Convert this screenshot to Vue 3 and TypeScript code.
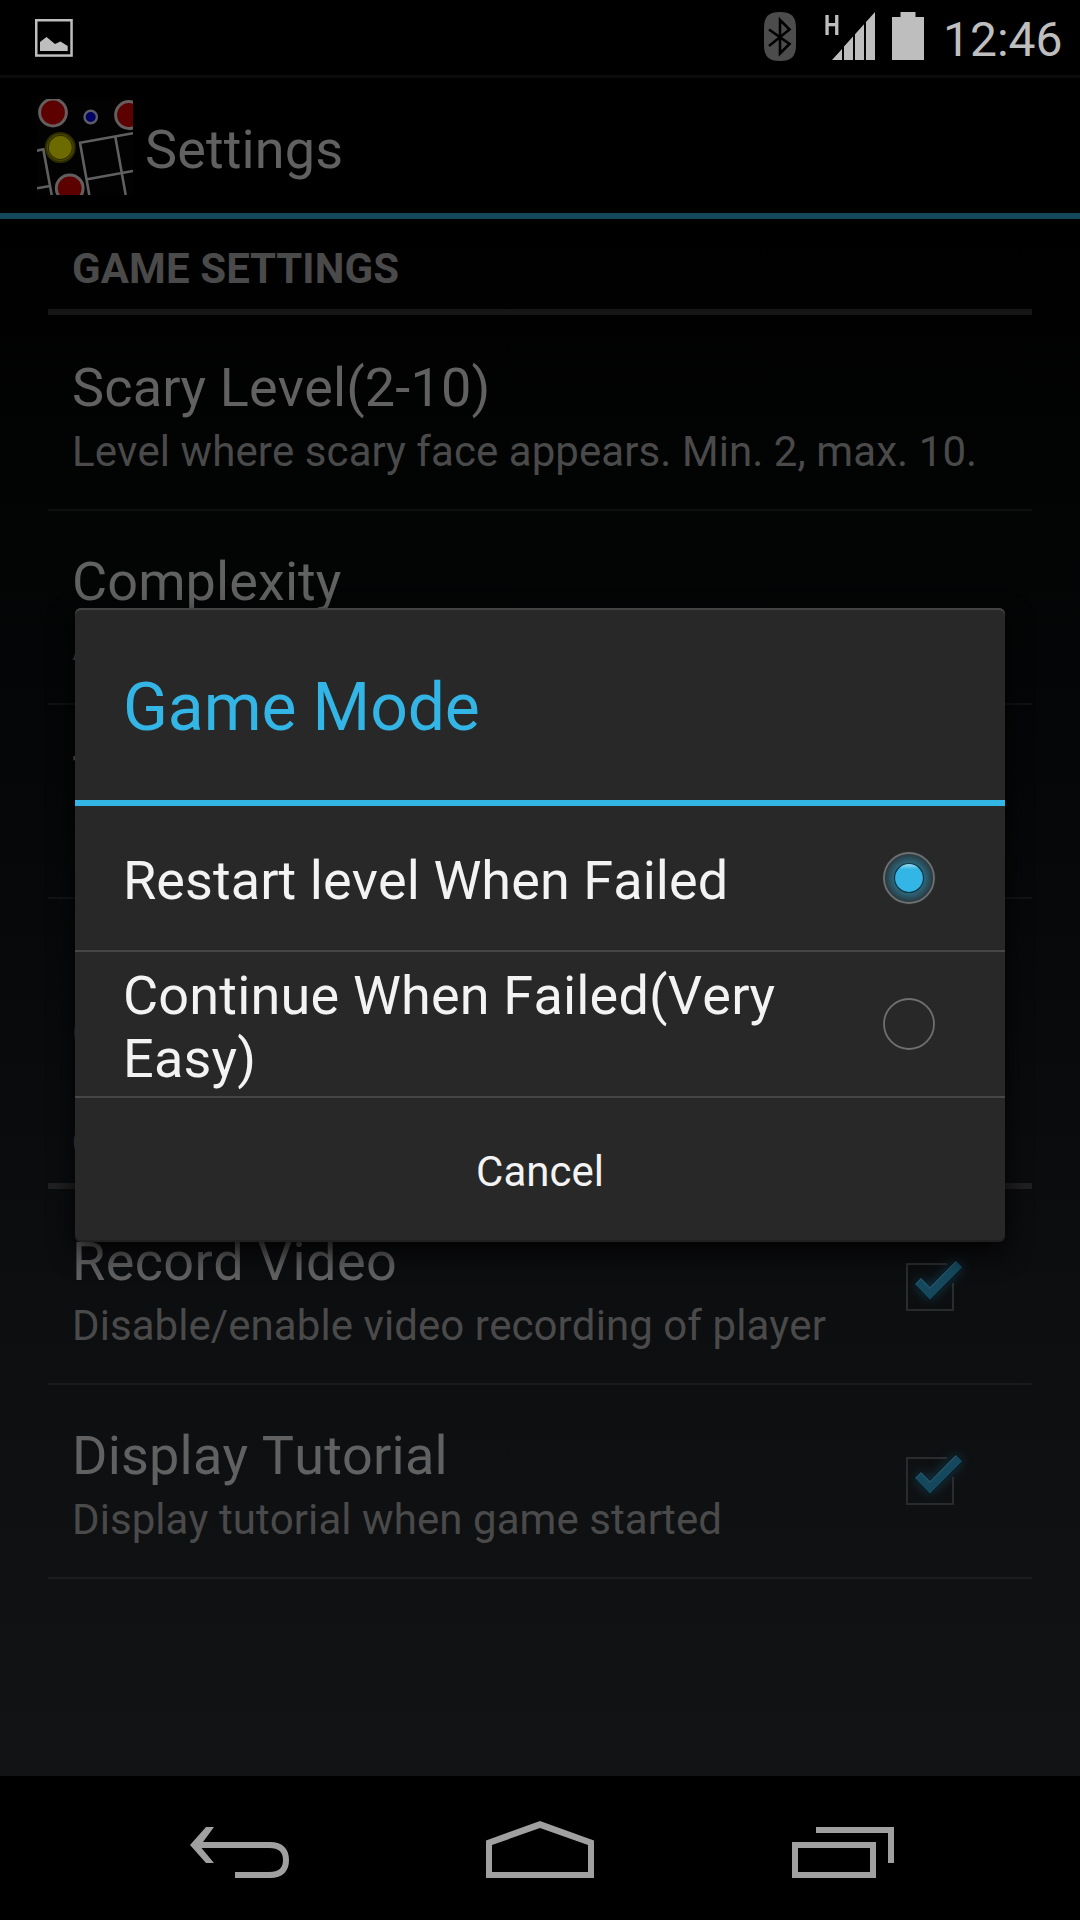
<script setup lang="ts">
import { ref } from 'vue'

interface Preference {
  title: string
  summary: string
  checked?: boolean
  tracking: number
}

interface Category {
  name: string
  items: Preference[]
}

const categories: Category[] = [
  {
    name: 'GAME SETTINGS',
    items: [
      { title: 'Scary Level(2-10)', summary: 'Level where scary face appears. Min. 2, max. 10.', tracking: 0.15 },
      { title: 'Complexity', summary: 'A', tracking: 0.1 },
      { title: 'T', summary: '', tracking: 0 },
      { title: '', summary: 'C', tracking: 0 },
    ],
  },
  {
    name: 'G',
    items: [
      { title: 'Record Video', summary: 'Disable/enable video recording of player', checked: true, tracking: 0.38 },
      { title: 'Display Tutorial', summary: 'Display tutorial when game started', checked: true, tracking: 0.2 },
    ],
  },
]

const modes = [
  { label: 'Restart level When Failed', tracking: 0.08 },
  { label: 'Continue When Failed(Very Easy)', tracking: 0.19 },
]
const selected = ref(0)
</script>

<template>
  <div class="screen">
    <header class="status">
      <svg class="shot" width="38" height="38" viewBox="0 0 38 38">
        <rect x="1.25" y="1.25" width="35.3" height="35.3" fill="none" stroke="#bebebe" stroke-width="2.5" />
        <path d="M5 32V23L11.5 18L20 25L25.5 22.5L32.7 27V32Z" fill="#bebebe" />
      </svg>
      <div class="tray">
        <svg width="32" height="49" viewBox="0 0 32 49">
          <path d="M16 0C27 0 32 4 32 16V33C32 45 27 49 16 49S0 45 0 33V16C0 4 5 0 16 0Z" fill="#4c4c4c" />
          <path d="M5 17.5L25.5 32L16 41.5V8L25.5 17.5L5 34" fill="none" stroke="#000" stroke-width="2.6" />
        </svg>
        <span class="net">H</span>
        <svg class="signal" width="43" height="48" viewBox="0 0 43 48">
          <path d="M0 48L10 37V48ZM12 48V34.6L21 24.6V48ZM23 48V22.3L32 12.3V48ZM34 48V10L43 0V48Z" fill="#bebebe" />
        </svg>
        <svg class="battery" width="32" height="48" viewBox="0 0 32 48">
          <path d="M0 5H8.5V0H23.5V5H32V48H0Z" fill="#bebebe" />
        </svg>
        <span class="clock">12:46</span>
      </div>
    </header>

    <div class="actionbar">
      <svg class="logo" width="96" height="96" viewBox="0 0 96 96">
        <rect width="96" height="96" fill="#020203" />
        <g fill="none" stroke="#606060" stroke-width="2.6">
          <path d="M96 34.3L43 43.7L52.3 96M78.3 37.7L88.7 96M50.3 80.3L96 72" />
          <path d="M0 51.7L6.3 50.3L14.7 96M0 89.3L13 87" />
        </g>
        <g fill="#5c0000" stroke="#645e5e" stroke-width="3">
          <circle cx="16" cy="13.5" r="13.4" />
          <circle cx="92" cy="16" r="13.4" />
          <circle cx="32.7" cy="89.3" r="13.4" />
        </g>
        <circle cx="53.7" cy="18" r="6.2" fill="#000064" stroke="#5c5c68" stroke-width="2.4" />
        <circle cx="23.3" cy="48.5" r="15.5" fill="#2e2d00" />
        <circle cx="23.3" cy="48.5" r="13" fill="none" stroke="#4a4900" stroke-width="1.2" />
        <circle cx="23.3" cy="48.5" r="11.4" fill="#6d6b00" />
      </svg>
      <h1>Settings</h1>
    </div>

    <main class="prefs">
      <section v-for="cat in categories" :key="cat.name">
        <h2>{{ cat.name }}</h2>
        <div v-for="item in cat.items" :key="item.title" class="pref">
          <div>
            <div class="title" :style="{ letterSpacing: item.tracking + 'px' }">{{ item.title }}</div>
            <div class="summary">{{ item.summary }}</div>
          </div>
          <svg v-if="item.checked" class="check" width="96" height="96" viewBox="-24 -24 96 96">
            <path d="M41 1H1V47H47V20" fill="none" stroke="#2a2b2c" stroke-width="2" />
            <path class="glow" d="M9 21.3L15 15.3L24 24.3L50 -2L56.3 4.3L24 36.7Z" />
            <path d="M9 21.3L15 15.3L24 24.3L50 -2L56.3 4.3L24 36.7Z" fill="#15485d" stroke="#081319" stroke-width="1.6" paint-order="stroke" />
            <path d="M9.6 21.3L15 15.9L24 24.9L50 -1.4" fill="none" stroke="#27576b" stroke-width="1.2" />
          </svg>
        </div>
      </section>
    </main>

    <nav class="navbar">
      <svg width="100" height="60" viewBox="190 1820 100 60">
        <path d="M206 1827H214L203 1842H270C283 1842 289 1849 289 1860S283 1878 270 1878H235V1872H269C279 1872 283 1868 283 1860S279 1848 269 1848H201.500L214 1863H206L190 1845Z" fill="#a0a0a0" />
      </svg>
      <svg class="home" width="108" height="60" viewBox="486 1820 108 60">
        <path fill-rule="evenodd" d="M540 1821L594 1840.500V1878H486V1840.500ZM540 1828L492 1845V1872H588V1845Z" fill="#a0a0a0" />
      </svg>
      <svg width="102" height="60" viewBox="792 1820 102 60">
        <path fill-rule="evenodd" d="M792 1842H876V1878H792ZM798 1848V1872H870V1848ZM816 1827H894V1863H888V1833H816Z" fill="#a0a0a0" />
      </svg>
    </nav>

    <div class="dialog" role="dialog">
      <div class="dialog-title"><span>Game Mode</span></div>
      <div v-for="(mode, i) in modes" :key="mode.label" class="choice" @click="selected = i">
        <span class="label" :style="{ letterSpacing: mode.tracking + 'px' }">{{ mode.label }}</span>
        <svg width="96" height="96" viewBox="-48 -48 96 96">
          <defs>
            <radialGradient id="halo">
              <stop offset="0.5" stop-color="#33b5e5" stop-opacity="0.5" />
              <stop offset="1" stop-color="#33b5e5" stop-opacity="0.02" />
            </radialGradient>
            <linearGradient id="shine" x1="0" y1="0" x2="0" y2="1">
              <stop offset="0" stop-color="#a5e0f6" />
              <stop offset="0.2" stop-color="#33b5e5" />
            </linearGradient>
          </defs>
          <circle v-if="selected === i" r="27" fill="url(#halo)" />
          <circle r="25" fill="none" stroke="#6f6f6f" stroke-width="1.8" />
          <circle v-if="selected === i" r="14.5" fill="url(#shine)" stroke="#113442" stroke-width="1.2" />
        </svg>
      </div>
      <button class="cancel" type="button">Cancel</button>
    </div>
  </div>
</template>

<style>
body {
  margin: 0;
  background: #000;
}
</style>

<style scoped>
.screen {
  position: relative;
  display: flex;
  flex-direction: column;
  width: 1080px;
  height: 1920px;
  overflow: hidden;
  background: #000;
  font-family: Roboto, "Noto Sans", sans-serif;
  font-kerning: none;
}
svg {
  display: block;
  flex: none;
}
h1,
h2 {
  margin: 0;
}
.status {
  display: flex;
  justify-content: space-between;
  height: 75px;
  border-bottom: 3px solid #0b0b0b;
}
.shot {
  margin: 19px 0 0 35px;
}
.tray {
  display: flex;
  align-items: flex-start;
  box-sizing: border-box;
  padding-top: 12px;
  width: 316px;
}
.net {
  width: 14px;
  margin: 0 0 0 28px;
  font-size: 28px;
  font-weight: 700;
  line-height: 27px;
  transform: scaleX(0.8);
  transform-origin: 0 0;
  color: #bebebe;
}
.signal {
  margin-left: -6px;
}
.battery {
  margin-left: 17px;
}
.clock {
  margin: -10px 0 0 19px;
  font-size: 48px;
  line-height: 75px;
  color: #bebebe;
}
.actionbar {
  display: flex;
  align-items: center;
  box-sizing: border-box;
  height: 141px;
  padding: 3px 0 0 37px;
  border-bottom: 6px solid #15485c;
}
h1 {
  padding: 6px 0 0 12px;
  font-size: 54px;
  font-weight: 400;
  line-height: 64px;
  letter-spacing: 0.13px;
  color: #616161;
}
.prefs {
  box-sizing: border-box;
  height: 1557px;
  padding: 0 48px;
  background: linear-gradient(#000 0%, #020303 16%, #060708 40%, #0d0e10 70%, #121315 100%);
}
h2 {
  box-sizing: border-box;
  height: 96px;
  margin-bottom: 2px;
  padding: 9px 24px 0;
  border-bottom: 6px solid rgba(255, 255, 255, 0.085);
  font-size: 42px;
  font-weight: 700;
  line-height: 82px;
  letter-spacing: 0.12px;
  color: #4a4a4a;
}
.pref {
  display: flex;
  justify-content: space-between;
  align-items: center;
  height: 192px;
  padding-left: 24px;
  padding-right: 54px;
  border-bottom: 2px solid rgba(255, 255, 255, 0.05);
}
section:first-child .pref:last-child {
  border-bottom-color: transparent;
}
.title {
  min-height: 71px;
  padding-top: 6px;
  font-size: 54px;
  line-height: 71px;
  color: #616161;
  white-space: nowrap;
}
.summary {
  min-height: 57px;
  font-size: 42px;
  line-height: 57px;
  letter-spacing: 0.07px;
  color: #4a4a4a;
  white-space: nowrap;
}
.glow {
  fill: #15607f;
  opacity: 0.6;
  filter: blur(6px);
}
.navbar {
  display: flex;
  box-sizing: border-box;
  height: 144px;
  padding: 44px 0 0 190px;
  background: #000;
}
.home {
  margin: 0 198px 0 196px;
}
.dialog {
  position: absolute;
  left: 75px;
  top: 608px;
  display: flex;
  flex-direction: column;
  width: 930px;
  height: 634px;
  border-radius: 6px;
  background: #282828;
  box-shadow: inset 0 2px 0 #434343, inset 0 -2px 0 #202020, 0 10px 26px rgba(0, 0, 0, 0.85);
}
.dialog-title {
  display: flex;
  align-items: center;
  box-sizing: border-box;
  height: 198px;
  padding: 7px 48px 0;
  border-bottom: 6px solid #33b5e5;
  font-size: 66px;
  letter-spacing: -0.1px;
  color: #33b5e5;
}
.choice {
  display: flex;
  align-items: center;
  justify-content: space-between;
  height: 144px;
  padding: 0 48px;
  border-bottom: 2px solid #464646;
}
.label {
  width: 700px;
  padding-top: 5px;
  font-size: 54px;
  line-height: 63px;
  color: #f3f3f3;
}
.cancel {
  flex: 1;
  padding: 4px 0 0;
  border: 0;
  background: none;
  font: 400 42px/50px Roboto, sans-serif;
  color: #f3f3f3;
}
</style>
